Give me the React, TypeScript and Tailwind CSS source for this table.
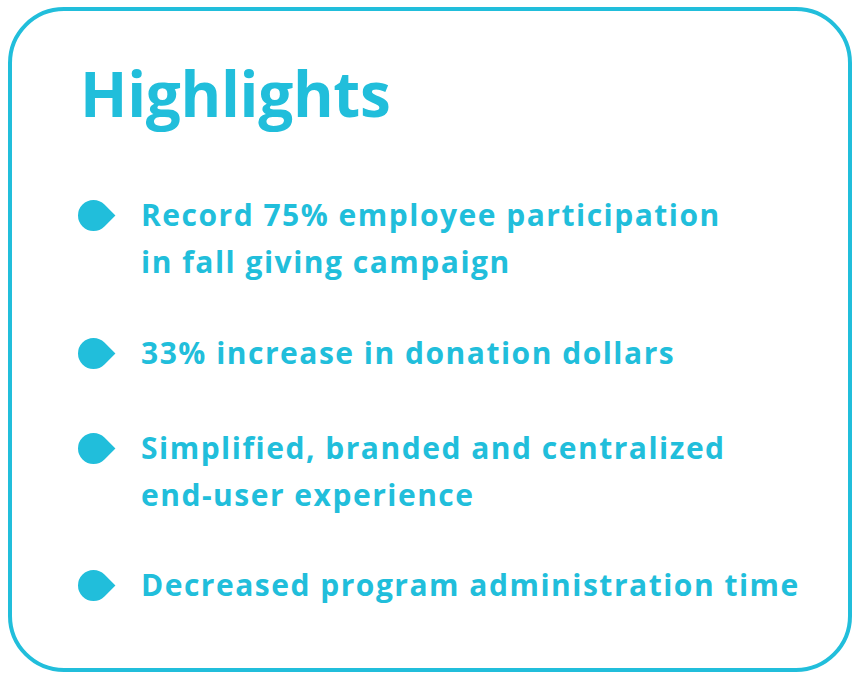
import React from 'react';

const items: { lines: string[]; mt: string }[] = [
  { lines: ['Record 75% employee participation', 'in fall giving campaign'], mt: 'mt-[67px]' },
  { lines: ['33% increase in donation dollars'], mt: 'mt-[44px]' },
  { lines: ['Simplified, branded and centralized', 'end-user experience'], mt: 'mt-[48px]' },
  { lines: ['Decreased program administration time'], mt: 'mt-[43px]' },
];

const Bullet: React.FC = () => (
  <span className="mt-[9px] block h-[31px] w-[31px] shrink-0 rotate-45 rounded-full rounded-tr-none bg-[#21bedb]" />
);

const App: React.FC = () => {
  return (
    <div className="h-[682px] w-[860px] bg-white pl-[8px] pt-[7px]" style={{ fontFamily: '"Open Sans", "Liberation Sans", sans-serif' }}>
      <div className="flex h-[665px] w-[844px] flex-col rounded-[56px] border-4 border-[#21bedb] pl-[66px] pt-[51px] text-[#21bedb]">
        <h1 className="ml-[2px] text-[62px] font-bold leading-none tracking-[-0.3px]">Highlights</h1>
        <ul>
          {items.map((item, i) => (
            <li key={i} className={`flex items-start gap-[32px] ${item.mt}`}>
              <Bullet />
              <p className="text-[30px] font-bold leading-[47px] tracking-[1.5px]">
                {item.lines.map((l, j) => (
                  <React.Fragment key={j}>
                    {j > 0 && <br />}
                    {l}
                  </React.Fragment>
                ))}
              </p>
            </li>
          ))}
        </ul>
      </div>
    </div>
  );
};

export default App;
